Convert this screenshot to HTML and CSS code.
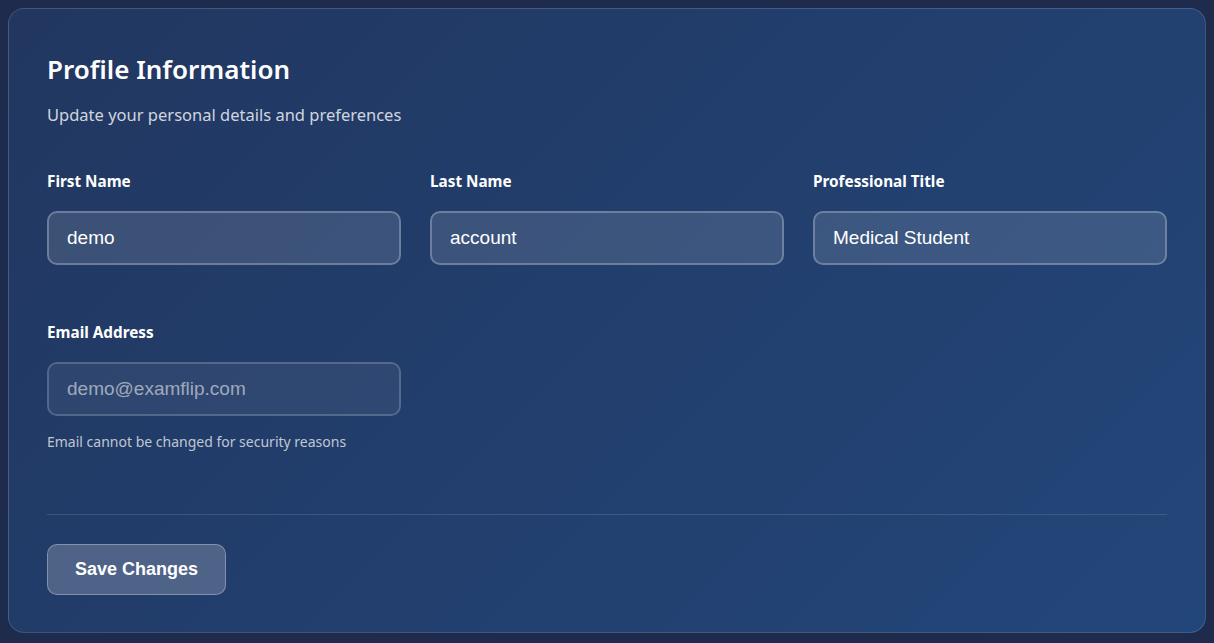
FILE: index.html
```html
<!DOCTYPE html>
<html lang="en">
<head>
<meta charset="utf-8">
<title>Profile Information</title>
<link rel="stylesheet" href="styles.css">
</head>
<body>
<section class="card">
  <h2 class="title">Profile Information</h2>
  <p class="subtitle">Update your personal details and preferences</p>
  <form class="form">
    <div class="grid">
      <div class="field">
        <label class="label">First Name</label>
        <input class="input" type="text" value="demo">
      </div>
      <div class="field">
        <label class="label">Last Name</label>
        <input class="input" type="text" value="account">
      </div>
      <div class="field">
        <label class="label">Professional Title</label>
        <input class="input" type="text" value="Medical Student">
      </div>
      <div class="field">
        <label class="label">Email Address</label>
        <input class="input input-disabled" type="email" value="demo@examflip.com" disabled>
        <span class="help">Email cannot be changed for security reasons</span>
      </div>
    </div>
    <div class="actions">
      <button type="button" class="btn">Save Changes</button>
    </div>
  </form>
</section>
</body>
</html>
```
FILE: styles.css
```css
html, body {
  height: 100%;
}
body {
  margin: 0;
  padding: 8px;
  box-sizing: border-box;
  background: #1f2b4c;
  font-family: "Noto Sans", "Open Sans", sans-serif;
  color: #ffffff;
}
.card {
  box-sizing: border-box;
  width: 100%;
  height: 625px;
  padding: 38px 38px;
  border: 1px solid rgba(255, 255, 255, 0.14);
  border-radius: 16px;
  background: linear-gradient(135deg, #213760 0%, #23467a 100%);
}
.title {
  margin: 0;
  font-size: 26px;
  font-weight: 600;
  line-height: 44px;
}
.subtitle {
  margin: 12px 0 0;
  font-size: 16.5px;
  line-height: 24px;
  color: rgba(255, 255, 255, 0.8);
}
.form {
  margin-top: 44px;
}
.grid {
  display: grid;
  grid-template-columns: repeat(3, 1fr);
  column-gap: 29px;
  row-gap: 57px;
}
.field {
  display: flex;
  flex-direction: column;
}
.label {
  font-size: 15.3px;
  font-weight: 700;
  line-height: 20px;
  margin-bottom: 20px;
}
.input {
  box-sizing: border-box;
  height: 54px;
  padding: 0 18px;
  border: 2px solid rgba(255, 255, 255, 0.25);
  border-radius: 10px;
  background: rgba(255, 255, 255, 0.12);
  color: #ffffff;
  font-family: "Liberation Sans", Arial, sans-serif;
  font-size: 19px;
  outline: none;
}
.input-disabled {
  background: rgba(255, 255, 255, 0.06);
  border-color: rgba(255, 255, 255, 0.18);
  color: rgba(255, 255, 255, 0.55);
}
.help {
  margin-top: 17px;
  font-size: 14px;
  line-height: 18px;
  color: rgba(255, 255, 255, 0.72);
}
.actions {
  margin-top: 63px;
  padding-top: 29px;
  border-top: 1px solid rgba(255, 255, 255, 0.12);
}
.btn {
  width: 179px;
  height: 51px;
  border: 1px solid rgba(255, 255, 255, 0.3);
  border-radius: 10px;
  background: rgba(255, 255, 255, 0.2);
  color: #ffffff;
  font-family: "Liberation Sans", Arial, sans-serif;
  font-size: 18px;
  font-weight: 700;
  cursor: pointer;
}
```
